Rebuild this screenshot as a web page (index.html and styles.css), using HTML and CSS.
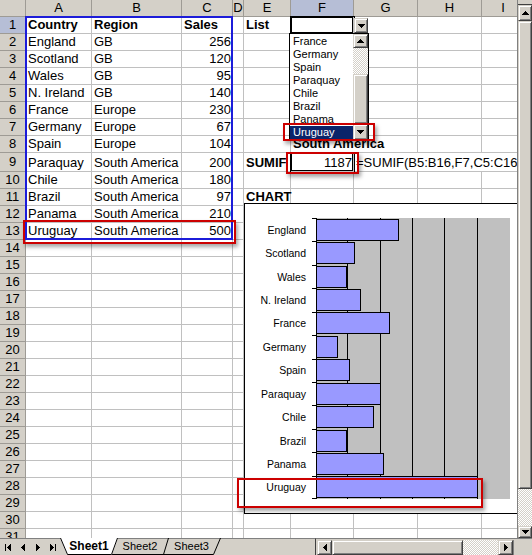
FILE: index.html
```html
<!DOCTYPE html>
<html>
<head>
<meta charset="utf-8">
<title>Excel SUMIF</title>
<link rel="stylesheet" href="styles.css">
</head>
<body>
<div class="app">
  <div class="sheet">
    <div class="grid">
      <div class="h"></div><div class="h">A</div><div class="h">B</div><div class="h">C</div><div class="h">D</div><div class="h">E</div><div class="h sel">F</div><div class="h">G</div><div class="h">H</div><div class="h">I</div>
      <div class="r sel">1</div><div class="c b">Country</div><div class="c b">Region</div><div class="c b">Sales</div><div class="c"></div><div class="c b">List</div><div class="c boxed"></div><div class="c"></div><div class="c"></div><div class="c"></div>
      <div class="r">2</div><div class="c">England</div><div class="c">GB</div><div class="c n">256</div><div class="c"></div><div class="c"></div><div class="c"></div><div class="c"></div><div class="c"></div><div class="c"></div>
      <div class="r">3</div><div class="c">Scotland</div><div class="c">GB</div><div class="c n">120</div><div class="c"></div><div class="c"></div><div class="c"></div><div class="c"></div><div class="c"></div><div class="c"></div>
      <div class="r">4</div><div class="c">Wales</div><div class="c">GB</div><div class="c n">95</div><div class="c"></div><div class="c"></div><div class="c"></div><div class="c"></div><div class="c"></div><div class="c"></div>
      <div class="r">5</div><div class="c">N. Ireland</div><div class="c">GB</div><div class="c n">140</div><div class="c"></div><div class="c"></div><div class="c"></div><div class="c"></div><div class="c"></div><div class="c"></div>
      <div class="r">6</div><div class="c">France</div><div class="c">Europe</div><div class="c n">230</div><div class="c"></div><div class="c"></div><div class="c"></div><div class="c"></div><div class="c"></div><div class="c"></div>
      <div class="r">7</div><div class="c">Germany</div><div class="c">Europe</div><div class="c n">67</div><div class="c"></div><div class="c"></div><div class="c"></div><div class="c"></div><div class="c"></div><div class="c"></div>
      <div class="r">8</div><div class="c">Spain</div><div class="c">Europe</div><div class="c n">104</div><div class="c"></div><div class="c"></div><div class="c b span2">South America</div><div class="c"></div><div class="c"></div>
      <div class="r">9</div><div class="c">Paraquay</div><div class="c">South America</div><div class="c n">200</div><div class="c"></div><div class="c b">SUMIF</div><div class="c n boxed">1187</div><div class="c span3">=SUMIF(B5:B16,F7,C5:C16)</div>
      <div class="r">10</div><div class="c">Chile</div><div class="c">South America</div><div class="c n">180</div><div class="c"></div><div class="c"></div><div class="c"></div><div class="c"></div><div class="c"></div><div class="c"></div>
      <div class="r">11</div><div class="c">Brazil</div><div class="c">South America</div><div class="c n">97</div><div class="c"></div><div class="c b">CHART</div><div class="c"></div><div class="c"></div><div class="c"></div><div class="c"></div>
      <div class="r">12</div><div class="c">Panama</div><div class="c">South America</div><div class="c n">210</div><div class="c"></div><div class="c"></div><div class="c"></div><div class="c"></div><div class="c"></div><div class="c"></div>
      <div class="r">13</div><div class="c">Uruguay</div><div class="c">South America</div><div class="c n">500</div><div class="c"></div><div class="c"></div><div class="c"></div><div class="c"></div><div class="c"></div><div class="c"></div>
      <div class="r">14</div><div class="c"></div><div class="c"></div><div class="c"></div><div class="c"></div><div class="c"></div><div class="c"></div><div class="c"></div><div class="c"></div><div class="c"></div>
      <div class="r">15</div><div class="c"></div><div class="c"></div><div class="c"></div><div class="c"></div><div class="c"></div><div class="c"></div><div class="c"></div><div class="c"></div><div class="c"></div>
      <div class="r">16</div><div class="c"></div><div class="c"></div><div class="c"></div><div class="c"></div><div class="c"></div><div class="c"></div><div class="c"></div><div class="c"></div><div class="c"></div>
      <div class="r">17</div><div class="c"></div><div class="c"></div><div class="c"></div><div class="c"></div><div class="c"></div><div class="c"></div><div class="c"></div><div class="c"></div><div class="c"></div>
      <div class="r">18</div><div class="c"></div><div class="c"></div><div class="c"></div><div class="c"></div><div class="c"></div><div class="c"></div><div class="c"></div><div class="c"></div><div class="c"></div>
      <div class="r">19</div><div class="c"></div><div class="c"></div><div class="c"></div><div class="c"></div><div class="c"></div><div class="c"></div><div class="c"></div><div class="c"></div><div class="c"></div>
      <div class="r">20</div><div class="c"></div><div class="c"></div><div class="c"></div><div class="c"></div><div class="c"></div><div class="c"></div><div class="c"></div><div class="c"></div><div class="c"></div>
      <div class="r">21</div><div class="c"></div><div class="c"></div><div class="c"></div><div class="c"></div><div class="c"></div><div class="c"></div><div class="c"></div><div class="c"></div><div class="c"></div>
      <div class="r">22</div><div class="c"></div><div class="c"></div><div class="c"></div><div class="c"></div><div class="c"></div><div class="c"></div><div class="c"></div><div class="c"></div><div class="c"></div>
      <div class="r">23</div><div class="c"></div><div class="c"></div><div class="c"></div><div class="c"></div><div class="c"></div><div class="c"></div><div class="c"></div><div class="c"></div><div class="c"></div>
      <div class="r">24</div><div class="c"></div><div class="c"></div><div class="c"></div><div class="c"></div><div class="c"></div><div class="c"></div><div class="c"></div><div class="c"></div><div class="c"></div>
      <div class="r">25</div><div class="c"></div><div class="c"></div><div class="c"></div><div class="c"></div><div class="c"></div><div class="c"></div><div class="c"></div><div class="c"></div><div class="c"></div>
      <div class="r">26</div><div class="c"></div><div class="c"></div><div class="c"></div><div class="c"></div><div class="c"></div><div class="c"></div><div class="c"></div><div class="c"></div><div class="c"></div>
      <div class="r">27</div><div class="c"></div><div class="c"></div><div class="c"></div><div class="c"></div><div class="c"></div><div class="c"></div><div class="c"></div><div class="c"></div><div class="c"></div>
      <div class="r">28</div><div class="c"></div><div class="c"></div><div class="c"></div><div class="c"></div><div class="c"></div><div class="c"></div><div class="c"></div><div class="c"></div><div class="c"></div>
      <div class="r">29</div><div class="c"></div><div class="c"></div><div class="c"></div><div class="c"></div><div class="c"></div><div class="c"></div><div class="c"></div><div class="c"></div><div class="c"></div>
      <div class="r">30</div><div class="c"></div><div class="c"></div><div class="c"></div><div class="c"></div><div class="c"></div><div class="c"></div><div class="c"></div><div class="c"></div><div class="c"></div>
      <div class="r">31</div><div class="c"></div><div class="c"></div><div class="c"></div><div class="c"></div><div class="c"></div><div class="c"></div><div class="c"></div><div class="c"></div><div class="c"></div>
    </div>

    <div class="range"></div>

    <div class="dd-btn rb"><svg class="ico" width="7" height="4" viewBox="0 0 7 4"><path d="M0 0h7v1h-1v1h-1v1h-1v1h-1v-1h-1v-1h-1v-1h-1z"/></svg></div>
    <div class="dd-list">
      <div class="dd-items">
        <div class="dd-item">France</div>
        <div class="dd-item">Germany</div>
        <div class="dd-item">Spain</div>
        <div class="dd-item">Paraquay</div>
        <div class="dd-item">Chile</div>
        <div class="dd-item">Brazil</div>
        <div class="dd-item">Panama</div>
        <div class="dd-item hl">Uruguay</div>
      </div>
      <div class="dd-sb">
        <div class="rb dd-up"><svg class="ico" width="7" height="4" viewBox="0 0 7 4"><path d="M3 0h1v1h1v1h1v1h1v1h-7v-1h1v-1h1v-1h1z"/></svg></div>
        <div class="track dd-track"></div>
        <div class="rb dd-thumb"></div>
        <div class="rb dd-down"><svg class="ico" width="7" height="4" viewBox="0 0 7 4"><path d="M0 0h7v1h-1v1h-1v1h-1v1h-1v-1h-1v-1h-1v-1h-1z"/></svg></div>
      </div>
    </div>

    <div class="chart">
      <div class="chart-body">
        <div class="cats">
          <div class="cat">England</div>
          <div class="cat">Scotland</div>
          <div class="cat">Wales</div>
          <div class="cat">N. Ireland</div>
          <div class="cat">France</div>
          <div class="cat">Germany</div>
          <div class="cat">Spain</div>
          <div class="cat">Paraquay</div>
          <div class="cat">Chile</div>
          <div class="cat">Brazil</div>
          <div class="cat">Panama</div>
          <div class="cat">Uruguay</div>
        </div>
        <div class="plot">
          <div class="bar-row"><div class="bar" style="width:82.8px"></div></div>
          <div class="bar-row"><div class="bar" style="width:38.8px"></div></div>
          <div class="bar-row"><div class="bar" style="width:30.7px"></div></div>
          <div class="bar-row"><div class="bar" style="width:45.3px"></div></div>
          <div class="bar-row"><div class="bar" style="width:74.4px"></div></div>
          <div class="bar-row"><div class="bar" style="width:21.7px"></div></div>
          <div class="bar-row"><div class="bar" style="width:33.6px"></div></div>
          <div class="bar-row"><div class="bar" style="width:64.7px"></div></div>
          <div class="bar-row"><div class="bar" style="width:58.2px"></div></div>
          <div class="bar-row"><div class="bar" style="width:31.4px"></div></div>
          <div class="bar-row"><div class="bar" style="width:67.9px"></div></div>
          <div class="bar-row"><div class="bar" style="width:161.7px"></div></div>
        </div>
      </div>
    </div>

    <div class="mark m-row"></div>
    <div class="mark m-list"></div>
    <div class="mark m-sum"></div>
    <div class="mark m-chart"></div>
  </div>

  <div class="vscroll">
    <div class="vsplit"></div>
    <div class="rb vs-up"><svg class="ico" width="7" height="4" viewBox="0 0 7 4"><path d="M3 0h1v1h1v1h1v1h1v1h-7v-1h1v-1h1v-1h1z"/></svg></div>
    <div class="rb vs-thumb"></div>
    <div class="track vs-track"></div>
    <div class="rb vs-down"><svg class="ico" width="7" height="4" viewBox="0 0 7 4"><path d="M0 0h7v1h-1v1h-1v1h-1v1h-1v-1h-1v-1h-1v-1h-1z"/></svg></div>
  </div>

  <div class="bottombar">
    <div class="nav">
      <span><svg class="ico" width="6" height="7" viewBox="0 0 6 7"><path d="M0 0h1v7h-1z"/><path d="M2 3h1v-1h1v-1h1v-1h1v7h-1v-1h-1v-1h-1v-1h-1z"/></svg></span>
      <span><svg class="ico" width="4" height="7" viewBox="0 0 4 7"><path d="M0 3h1v-1h1v-1h1v-1h1v7h-1v-1h-1v-1h-1v-1h-1z"/></svg></span>
      <span><svg class="ico" width="4" height="7" viewBox="0 0 4 7"><path d="M0 0h1v1h1v1h1v1h1v1h-1v1h-1v1h-1v1h-1z"/></svg></span>
      <span><svg class="ico" width="6" height="7" viewBox="0 0 6 7"><path d="M0 0h1v1h1v1h1v1h1v1h-1v1h-1v1h-1v1h-1z"/><path d="M5 0h1v7h-1z"/></svg></span>
    </div>
    <div class="tabs">
      <span class="tab tab1">Sheet1</span>
      <span class="tab tab2">Sheet2</span>
      <span class="tab tab3">Sheet3</span>
    </div>
    <div class="hsplit"></div>
    <div class="hscroll">
      <div class="rb hs-left"><svg class="ico" width="4" height="7" viewBox="0 0 4 7"><path d="M0 3h1v-1h1v-1h1v-1h1v7h-1v-1h-1v-1h-1v-1h-1z"/></svg></div>
      <div class="rb hs-thumb"></div>
      <div class="track hs-track"></div>
      <div class="rb hs-right"><svg class="ico" width="4" height="7" viewBox="0 0 4 7"><path d="M0 0h1v1h1v1h1v1h1v1h-1v1h-1v1h-1v1h-1z"/></svg></div>
      <div class="hs-end"></div>
    </div>
  </div>
  <div class="corner"></div>
</div>
</body>
</html>
```
FILE: styles.css
```css
html, body {
  margin: 0;
  padding: 0;
  background: #fff;
}
body {
  font-family: "Liberation Sans", Arial, sans-serif;
  font-size: 13px;
  color: #000;
}
.app {
  display: grid;
  grid-template-columns: 517px 15px;
  grid-template-rows: 538px 17px;
  width: 532px;
  height: 555px;
  overflow: hidden;
  background: #d4d0c8;
}

/* ---------- worksheet ---------- */
.sheet {
  position: relative;
  overflow: hidden;
  background: #fff;
}
.grid {
  display: grid;
  grid-template-columns: 26px 66px 90px 51px 11px 47px 63px 64px 64px 43px;
  grid-template-rows: repeat(9, 17px) 19px repeat(22, 17px);
}
.grid > div {
  box-sizing: border-box;
  white-space: nowrap;
  min-width: 0;
}
.h, .r {
  background: #d4d0c8;
  border-right: 1px solid #9e9b95;
  border-bottom: 1px solid #9e9b95;
  display: flex;
  align-items: center;
  justify-content: center;
  line-height: 16px;
}
.sel {
  background: #b6bed6;
}
.c {
  border-right: 1px solid #c0c0c0;
  border-bottom: 1px solid #c0c0c0;
  display: flex;
  align-items: flex-end;
  padding: 0 1px 0 2px;
  line-height: 16px;
}
.n {
  justify-content: flex-end;
}
.b {
  font-weight: bold;
}
.span2 {
  grid-column: span 2;
}
.span3 {
  grid-column: span 3;
}
.boxed {
  position: relative;
  z-index: 1;
  box-shadow: 0 0 0 1px #000, inset 0 0 0 1px #000;
}

/* range finder */
.range {
  position: absolute;
  left: 25px;
  top: 16px;
  width: 208px;
  height: 224px;
  box-sizing: border-box;
  border: 2px solid #1c1cd9;
  z-index: 2;
}

/* ---------- classic controls ---------- */
.rb {
  background: #d4d0c8;
  box-sizing: border-box;
  border: 1px solid;
  border-color: #d4d0c8 #404040 #404040 #d4d0c8;
  box-shadow: inset 1px 1px #fff, inset -1px -1px #808080;
  display: flex;
  align-items: center;
  justify-content: center;
}
.track {
  background: repeating-conic-gradient(#fff 0 25%, #d4d0c8 0 50%) 0 0 / 2px 2px;
}
.ico {
  display: block;
  fill: #000;
  shape-rendering: crispEdges;
}

/* ---------- validation dropdown ---------- */
.dd-btn {
  position: absolute;
  left: 354px;
  top: 18px;
  width: 14px;
  height: 15px;
  z-index: 3;
}
.dd-list {
  position: absolute;
  left: 289px;
  top: 33px;
  width: 80px;
  height: 108px;
  box-sizing: border-box;
  border: 1px solid #000;
  background: #fff;
  display: flex;
  z-index: 3;
}
.dd-items {
  width: 63px;
  padding-top: 1px;
  font-size: 11px;
}
.dd-item {
  height: 13px;
  line-height: 13px;
  padding-left: 3px;
  white-space: nowrap;
}
.dd-item.hl {
  background: #0a246a;
  color: #fff;
}
.dd-sb {
  flex: 1;
  display: flex;
  flex-direction: column;
}
.dd-up {
  height: 14px;
}
.dd-track {
  height: 26px;
}
.dd-thumb {
  flex: 1;
}
.dd-down {
  height: 16px;
}

/* ---------- chart ---------- */
.chart {
  position: absolute;
  left: 244px;
  top: 203px;
  width: 290px;
  height: 311px;
  box-sizing: border-box;
  border: 1px solid #000;
  background: #fff;
  z-index: 2;
}
.chart-body {
  display: flex;
  margin-top: 14px;
}
.cats {
  width: 71px;
  height: 281px;
  display: flex;
  flex-direction: column;
}
.cat {
  flex: 1;
  display: flex;
  align-items: center;
  justify-content: flex-end;
  padding-right: 10px;
  font-size: 10.5px;
  position: relative;
  white-space: nowrap;
}
.cat::before {
  content: "";
  position: absolute;
  right: 0;
  top: 0;
  width: 4px;
  height: 1px;
  background: #000;
}
.cat:last-child::after {
  content: "";
  position: absolute;
  right: 0;
  bottom: 0;
  width: 4px;
  height: 1px;
  background: #000;
}
.plot {
  width: 194px;
  height: 281px;
  background-color: #c0c0c0;
  background-image: repeating-linear-gradient(90deg, transparent 0 31.33px, #000 31.33px 32.33px);
  background-size: 190px 100%;
  background-repeat: no-repeat;
  box-shadow: inset 1px 0 #000;
  display: flex;
  flex-direction: column;
}
.bar-row {
  flex: 1;
  display: flex;
  align-items: center;
}
.bar {
  height: 22px;
  box-sizing: border-box;
  background: #9999ff;
  border: 1px solid #000;
}

/* ---------- red annotation boxes ---------- */
.mark {
  position: absolute;
  box-sizing: border-box;
  border: 2px solid #cc0000;
  box-shadow: 2px 3px 4px rgba(0, 0, 0, 0.35);
  z-index: 5;
}
.m-row {
  left: 23px;
  top: 220px;
  width: 213px;
  height: 24px;
}
.m-list {
  left: 283px;
  top: 123px;
  width: 92px;
  height: 18px;
}
.m-sum {
  left: 286px;
  top: 152px;
  width: 73px;
  height: 22px;
}
.m-chart {
  left: 237px;
  top: 478px;
  width: 246px;
  height: 30px;
}

/* ---------- vertical scrollbar ---------- */
.vscroll {
  display: flex;
  flex-direction: column;
  background: #d4d0c8;
  border-left: 1px solid #808080;
  box-sizing: border-box;
}
.vsplit {
  height: 5px;
  box-sizing: border-box;
  border-bottom: 1px solid #404040;
}
.vs-up {
  height: 16px;
}
.vs-thumb {
  height: 468px;
}
.vs-track {
  flex: 1;
}
.vs-down {
  height: 12px;
}

/* ---------- bottom bar ---------- */
.bottombar {
  display: flex;
  height: 17px;
  background: #d4d0c8;
}
.nav {
  width: 60px;
  display: flex;
  align-items: center;
  box-sizing: border-box;
  border-top: 1px solid #808080;
}
.nav span {
  width: 15px;
  display: flex;
  justify-content: center;
}
.tabs {
  width: 255px;
  display: flex;
  background-image: url("data:image/svg+xml,%3Csvg xmlns='http://www.w3.org/2000/svg' width='255' height='17'%3E%3Cpath d='M0 0.5H255' stroke='%23808080'/%3E%3Cpath d='M103 16.5H153.5L160.5 0' fill='none' stroke='%23000'/%3E%3Cpath d='M52 16.5H103.5L108.5 0' fill='none' stroke='%23000'/%3E%3Cpath d='M0 0L7 16.5H52L58 0Z' fill='%23fff'/%3E%3Cpath d='M0.5 0L7.5 16.5H51.5L57.5 0' fill='none' stroke='%23000'/%3E%3C/svg%3E");
  background-repeat: no-repeat;
}
.tab {
  line-height: 17px;
  text-align: center;
  font-size: 11px;
  white-space: nowrap;
}
.tab1 {
  width: 58px;
  font-weight: bold;
  font-size: 12px;
}
.tab2 {
  width: 56px;
  margin-left: -6px;
}
.tab3 {
  width: 57px;
  margin-left: -5px;
}
.hsplit {
  width: 2px;
  box-sizing: border-box;
  border-left: 1px solid #404040;
  border-top: 1px solid #808080;
}
.hscroll {
  flex: 1;
  display: flex;
  box-sizing: border-box;
  border-top: 1px solid #808080;
  padding-top: 1px;
}
.hs-left, .hs-right {
  width: 15px;
}
.hs-thumb {
  width: 131px;
}
.hs-track {
  flex: 1;
}
.hs-end {
  width: 4px;
  box-sizing: border-box;
  border-left: 1px solid #808080;
}
.corner {
  background: #d4d0c8;
  border-top: 1px solid #808080;
  box-sizing: border-box;
}
```
